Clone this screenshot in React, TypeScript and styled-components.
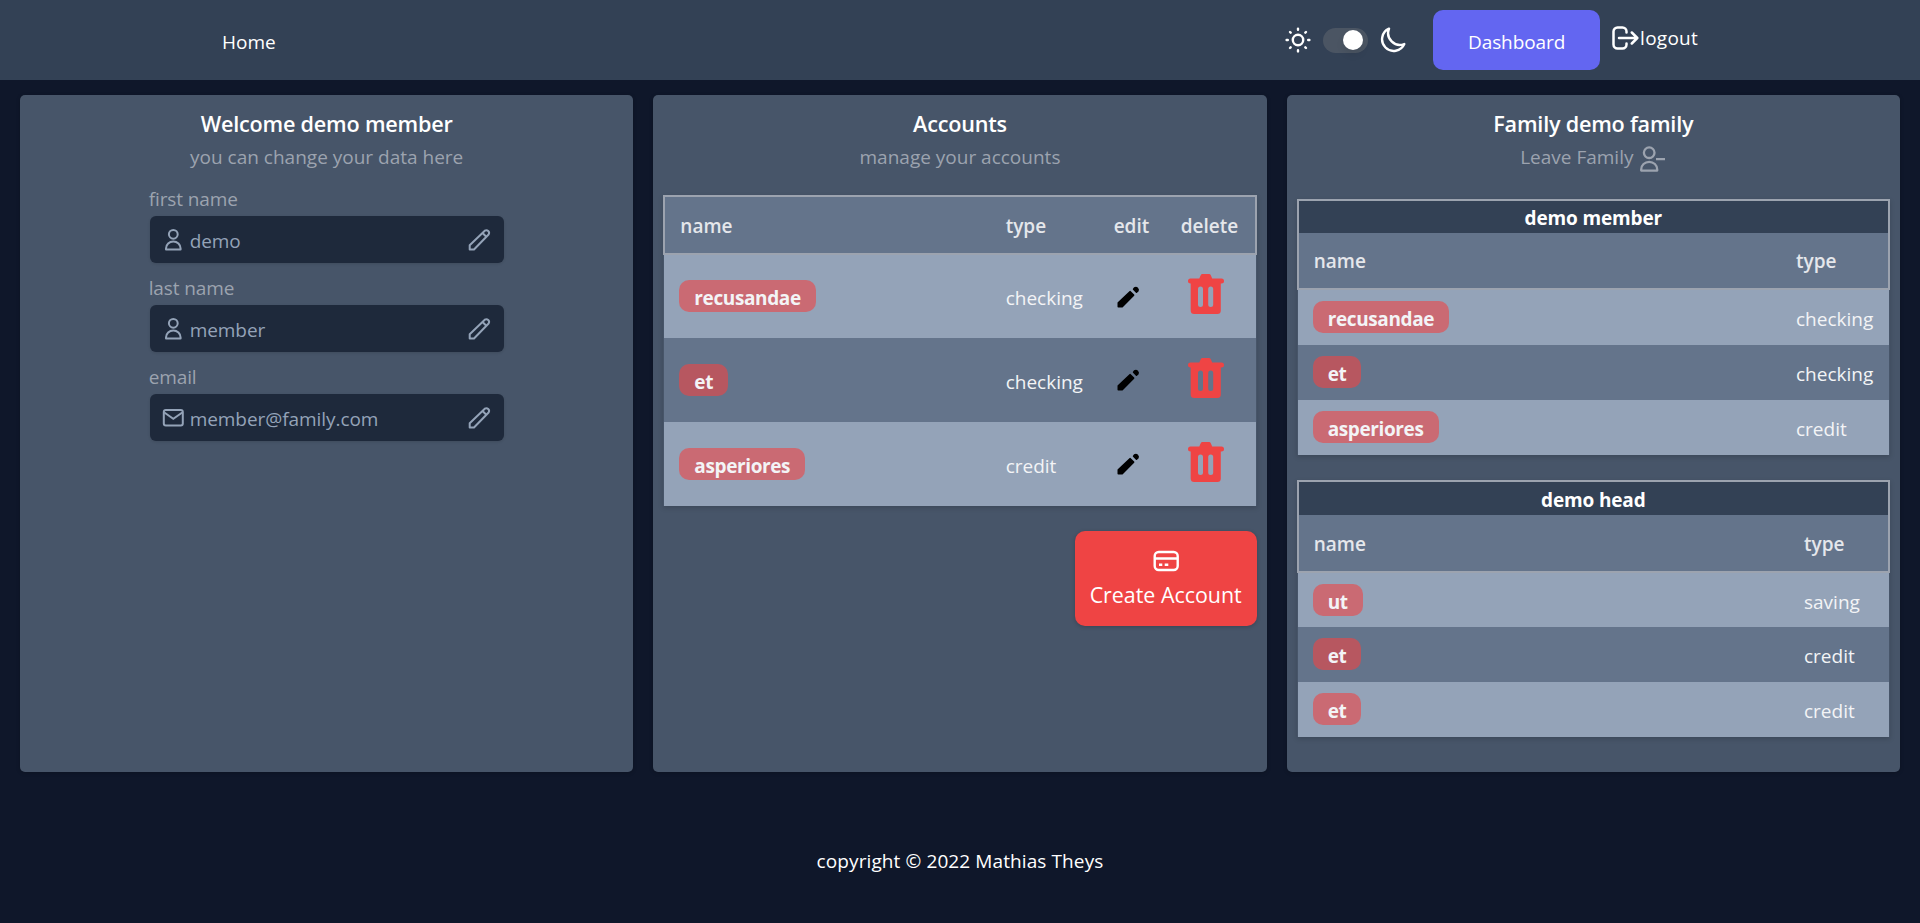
import React from "react";
import styled, { createGlobalStyle } from "styled-components";

const GlobalStyle = createGlobalStyle`
  *, *::before, *::after { box-sizing: border-box; }
  body {
    margin: 0;
    background: #0f172a;
    color: #fff;
    font: 400 19px/30px "Open Sans", "Noto Sans", sans-serif;
  }
  h1, p { margin: 0; }
  svg { display: block; flex: none; }
`;

const Page = styled.div`
  display: flex;
  flex-direction: column;
  min-height: 923px;
`;

const Navbar = styled.nav`
  display: flex;
  align-items: center;
  height: 80px;
  padding: 0 222px;
  background: #334155;
`;

const NavLink = styled.a`
  padding-top: 4px;
`;

const NavTools = styled.div`
  display: flex;
  align-items: center;
  margin-left: auto;
`;

const Toggle = styled.span`
  display: flex;
  justify-content: flex-end;
  align-items: center;
  width: 45px;
  height: 25px;
  margin: 0 12px;
  padding-right: 5px;
  border-radius: 13px;
  background: #4b5563;
`;

const Knob = styled.span`
  width: 20px;
  height: 20px;
  border-radius: 50%;
  background: #fff;
  box-shadow: 0 5px 8px -1px rgba(0, 0, 0, 0.1);
`;

const DashboardButton = styled.button`
  width: 167px;
  height: 60px;
  margin: 0 11px 0 27px;
  padding: 4px 0 0;
  border: 0;
  border-radius: 10px;
  background: #6366f1;
  color: #fff;
  font: inherit;
  letter-spacing: -0.1px;
`;

const Logout = styled.a`
  display: flex;
  align-items: center;
  gap: 1px;
  margin-top: -5px;
  letter-spacing: 0.25px;
`;

const Columns = styled.main`
  display: grid;
  grid-template-columns: repeat(3, 1fr);
  gap: 20px;
  padding: 15px 20px 0;
  height: 692px;
`;

const Panel = styled.section`
  padding: 10px;
  border-radius: 5px;
  background: #475569;
  box-shadow: 0 1px 4px rgba(0, 0, 0, 0.2);
`;

const Title = styled.h1`
  padding-top: 4px;
  font-size: 21.6px;
  line-height: 30px;
  font-weight: 600;
  text-align: center;
  letter-spacing: -0.2px;
`;

const Subtitle = styled.p`
  display: flex;
  justify-content: center;
  gap: 6px;
  height: 30px;
  margin-top: 3px;
  color: #9ca3af;
`;

const Form = styled.form`
  display: flex;
  flex-direction: column;
  width: 354px;
  margin: 12px auto 0;
`;

const Label = styled.label`
  height: 32px;
  margin-left: -1px;
  color: #9ca3af;
  letter-spacing: -0.1px;
`;

const Field = styled.div`
  display: flex;
  align-items: center;
  height: 47px;
  margin-bottom: 10px;
  padding: 0 12px;
  border-radius: 6px;
  background: #1e293b;
  color: #94a3b8;
  box-shadow: 0 1px 3px rgba(0, 0, 0, 0.12);
`;

const Value = styled.span`
  flex: 1;
  padding: 3px 0 0 6px;
  letter-spacing: -0.06px;
`;

const Table = styled.table`
  width: 100%;
  border-collapse: collapse;
  box-shadow: 0 2px 5px rgba(0, 0, 0, 0.16);
`;

const Head = styled.thead`
  border: 2px solid #9ca3af;
  background: #64748b;
  color: #e5e7eb;
`;

const HeadCell = styled.th<{ $width?: number; $height: number }>`
  width: ${(p) => (p.$width ? `${p.$width}px` : "auto")};
  height: ${(p) => p.$height}px;
  padding: 1px 15px 0;
  font-weight: 600;
  font-size: 19px;
  text-align: left;
`;

const Owner = styled.th<{ $height: number }>`
  height: ${(p) => p.$height}px;
  padding: 2px 0 0;
  background: #334155;
  color: #fff;
  font-weight: 700;
  line-height: 28px;
  letter-spacing: -0.14px;
`;

const Row = styled.tr<{ $height: number }>`
  height: ${(p) => p.$height}px;
  background: #64748b;
  color: #f3f4f6;
  &:nth-child(odd) { background: #94a3b8; }
`;

const Cell = styled.td`
  padding: 3px 15px 0;
`;

const EditCell = styled.td`
  padding: 0 0 0 18px;
`;

const DeleteCell = styled.td`
  padding: 0 0 5px 22px;
`;

const Badge = styled.span`
  display: block;
  width: max-content;
  height: 32px;
  margin-top: -4px;
  padding: 3px 15px 0;
  border-radius: 10px;
  background: rgba(239, 68, 68, 0.6);
  font-weight: 700;
  letter-spacing: -0.38px;
`;

const CreateButton = styled.button`
  display: flex;
  flex-direction: column;
  align-items: center;
  width: 182px;
  height: 95px;
  margin: 25px 0 0 auto;
  padding: 16px 0 0;
  border: 0;
  border-radius: 10px;
  background: #ef4444;
  color: #fff;
  font: inherit;
  font-size: 21.4px;
  line-height: 39px;
  box-shadow: 0 1px 4px rgba(0, 0, 0, 0.2);
`;

const TableSlot = styled.div<{ $top: number }>`
  margin-top: ${(p) => p.$top}px;
`;

const Footer = styled.footer`
  padding-top: 74px;
  text-align: center;
  letter-spacing: 0.1px;
`;

const line = { fill: "none", stroke: "currentColor" } as const;

const Sun = () => (
  <svg width="26" height="26" viewBox="0 0 26 26" {...line} strokeWidth="2.4">
    <circle cx="13" cy="13" r="5.2" />
    <path strokeLinecap="round" d="M13 1.600v1.200M13 23.200v1.200M1.600 13h1.200M23.200 13h1.200M5 5l.7.7M20.300 20.300l.7.7M5 21l.7-.7M20.300 5.700l.7-.7" />
  </svg>
);

const Moon = () => (
  <svg width="26" height="26" viewBox="0 0 26 26" {...line} strokeWidth="2.4" strokeLinejoin="round">
    <path d="M9 1.700A11.600 11.600 0 1 0 24.300 17 11.800 11.800 0 0 1 9 1.700z" />
  </svg>
);

const Exit = () => (
  <svg width="28" height="28" viewBox="0 0 28 28" {...line} strokeWidth="2.5" strokeLinecap="round" strokeLinejoin="round">
    <path d="M15.500 8.500V7.500a4 4 0 0 0-4-4H6.500a4 4 0 0 0-4 4v13a4 4 0 0 0 4 4h5a4 4 0 0 0 4-4V19.500M8 14h18M20.800 8.500l5.500 5.500-5.500 5.500" />
  </svg>
);

const Person = () => (
  <svg width="22" height="25" viewBox="0 0 22 25" {...line} strokeWidth="2">
    <circle cx="11.300" cy="7.300" r="4.400" />
    <path strokeLinejoin="round" d="M4 22.500v-1a7.300 7 0 0 1 14.600 0v1z" />
  </svg>
);

const PersonMinus = () => (
  <svg width="27" height="32" viewBox="0 0 27 32" {...line} strokeWidth="2.300">
    <circle cx="10.200" cy="10.700" r="5.300" />
    <path strokeLinejoin="round" d="M2.200 28.600v-1.200a8 7.600 0 0 1 16 0v1.200zM17 17.200h9" />
  </svg>
);

const Envelope = () => (
  <svg width="22" height="25" viewBox="0 0 22 25" {...line} strokeWidth="2">
    <rect x="1.800" y="5" width="19" height="15.500" rx="2" />
    <path d="M2.300 7.500l9 6.200 9-6.200" />
  </svg>
);

const PencilOutline = () => (
  <svg width="25" height="25" viewBox="0 0 25 25" {...line} strokeWidth="2" strokeLinejoin="round">
    <path d="M2.700 22.500v-4.300L17.800 3.700a2.750 2.750 0 0 1 3.800 3.800L7 22.500zM15.500 6l3.800 3.800" />
  </svg>
);

const PencilSolid = () => (
  <svg width="25" height="30" viewBox="0 0 25 30" fill="#000" stroke="#000" strokeLinejoin="round">
    <path d="M1.300 24.700v-3.900L13.200 9.700l3.400 3.400L5.200 24.700zM16.600 7.200l.9-1.200a2.300 2.300 0 0 1 3.200 3.200l-1.200.9z" strokeWidth="1.600" />
  </svg>
);

const Trash = () => (
  <svg width="36" height="42" viewBox="0 0 36 42" fill="#ef4444" fillRule="evenodd">
    <path d="M14.500 1h6.500a2 2 0 0 1 1.800 1.200L24.200 5.500h9.300a2.500 2.500 0 0 1 0 5H32.800v27a3.500 3.500 0 0 1-3.500 3.500H6.200a3.500 3.500 0 0 1-3.500-3.500V10.500H2.500a2.500 2.500 0 0 1 0-5h8.800l1.400-3.300A2 2 0 0 1 14.500 1zM12.500 13.500a2.500 2.500 0 0 0-2.500 2.500v15.500a2.500 2.500 0 0 0 5 0V16a2.500 2.500 0 0 0-2.500-2.500zM22.700 13.500a2.500 2.500 0 0 0-2.500 2.500v15.500a2.500 2.500 0 0 0 5 0V16a2.500 2.500 0 0 0-2.500-2.500z" />
  </svg>
);

const Card = () => (
  <svg width="28" height="28" viewBox="0 0 28 28" {...line} strokeWidth="2.400">
    <rect x="2.700" y="5" width="23" height="18" rx="4" />
    <path d="M2.700 11.500h23M7 17.700h3.300M12.700 17.700h3.600" />
  </svg>
);

type Account = { name: string; type: string };

const mine: Account[] = [
  { name: "recusandae", type: "checking" },
  { name: "et", type: "checking" },
  { name: "asperiores", type: "credit" },
];

const families = [
  { owner: "demo member", accounts: mine, typeWidth: 108, ownerHeight: 33, headHeight: 56 },
  {
    owner: "demo head",
    accounts: [
      { name: "ut", type: "saving" },
      { name: "et", type: "credit" },
      { name: "et", type: "credit" },
    ],
    typeWidth: 100,
    ownerHeight: 34,
    headHeight: 57,
  },
];

const fields = [
  { label: "first name", value: "demo", icon: <Person /> },
  { label: "last name", value: "member", icon: <Person /> },
  { label: "email", value: "member@family.com", icon: <Envelope /> },
];

export default function App() {
  return (
    <Page>
      <GlobalStyle />
      <Navbar>
        <NavLink>Home</NavLink>
        <NavTools>
          <Sun />
          <Toggle><Knob /></Toggle>
          <Moon />
          <DashboardButton>Dashboard</DashboardButton>
          <Logout><Exit />logout</Logout>
        </NavTools>
      </Navbar>
      <Columns>
        <Panel>
          <Title>Welcome demo member</Title>
          <Subtitle>you can change your data here</Subtitle>
          <Form>
            {fields.map((f) => (
              <React.Fragment key={f.label}>
                <Label>{f.label}</Label>
                <Field>{f.icon}<Value>{f.value}</Value><PencilOutline /></Field>
              </React.Fragment>
            ))}
          </Form>
        </Panel>
        <Panel>
          <Title>Accounts</Title>
          <Subtitle>manage your accounts</Subtitle>
          <TableSlot $top={23}>
            <Table>
              <Head>
                <tr>
                  <HeadCell $height={58}>name</HeadCell>
                  <HeadCell $height={58} $width={108}>type</HeadCell>
                  <HeadCell $height={58} $width={67}>edit</HeadCell>
                  <HeadCell $height={58} $width={90}>delete</HeadCell>
                </tr>
              </Head>
              <tbody>
                {mine.map((a) => (
                  <Row key={a.name} $height={84}>
                    <Cell><Badge>{a.name}</Badge></Cell>
                    <Cell>{a.type}</Cell>
                    <EditCell><PencilSolid /></EditCell>
                    <DeleteCell><Trash /></DeleteCell>
                  </Row>
                ))}
              </tbody>
            </Table>
          </TableSlot>
          <CreateButton><Card />Create Account</CreateButton>
        </Panel>
        <Panel>
          <Title>Family demo family</Title>
          <Subtitle>Leave Family <PersonMinus /></Subtitle>
          {families.map((f, i) => (
            <TableSlot key={f.owner} $top={i ? 25 : 27}>
              <Table>
                <Head>
                  <tr><Owner colSpan={2} $height={f.ownerHeight}>{f.owner}</Owner></tr>
                  <tr>
                    <HeadCell $height={f.headHeight}>name</HeadCell>
                    <HeadCell $height={f.headHeight} $width={f.typeWidth}>type</HeadCell>
                  </tr>
                </Head>
                <tbody>
                  {f.accounts.map((a, n) => (
                    <Row key={n} $height={n === 0 && i === 0 ? 56 : 55}>
                      <Cell><Badge>{a.name}</Badge></Cell>
                      <Cell>{a.type}</Cell>
                    </Row>
                  ))}
                </tbody>
              </Table>
            </TableSlot>
          ))}
        </Panel>
      </Columns>
      <Footer>copyright © 2022 Mathias Theys</Footer>
    </Page>
  );
}
